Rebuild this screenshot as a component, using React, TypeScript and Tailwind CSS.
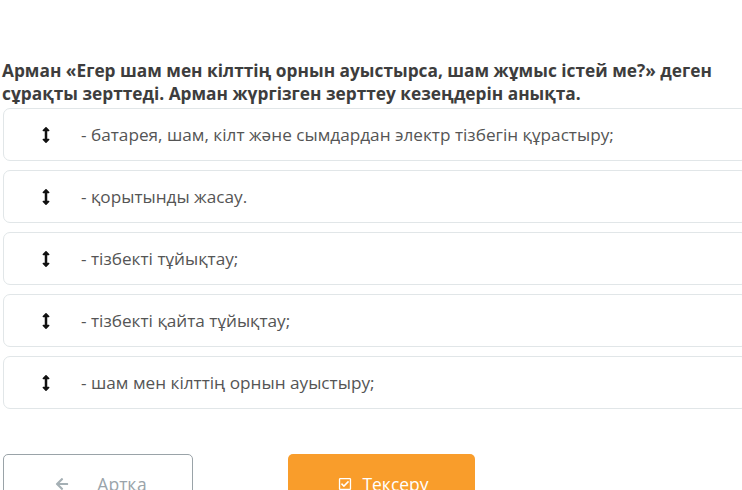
import React from "react";
import { FaArrowsAltV, FaArrowLeft, FaRegCheckSquare } from "react-icons/fa";

const items = [
  "- батарея, шам, кілт және сымдардан электр тізбегін құрастыру;",
  "- қорытынды жасау.",
  "- тізбекті тұйықтау;",
  "- тізбекті қайта тұйықтау;",
  "- шам мен кілттің орнын ауыстыру;",
];

export default function App() {
  return (
    <div
      className="w-[742px] h-[490px] overflow-hidden bg-white relative"
      style={{ fontFamily: '"Open Sans", "Noto Sans", sans-serif' }}
    >
      <div className="pt-[59px] pl-[2px] pr-2">
        <h2 className="text-[17.3px] leading-[23px] font-bold text-[#3d3d3d]">
          Арман «Егер шам мен кілттің орнын ауыстырса, шам жұмыс істей ме?» деген сұрақты зерттеді. Арман жүргізген зерттеу кезеңдерін анықта.
        </h2>
      </div>
      <div className="flex flex-col gap-[9px] mt-[3px] ml-[3px] w-[745px]">
        {items.map((t, i) => (
          <div
            key={i}
            className="h-[53px] rounded-[7px] border border-[#e1e6e8] flex items-center bg-white"
          >
            <FaArrowsAltV className="ml-[38px] w-[8px] h-[16px] text-[#111]" />
            <span className="ml-[31px] text-[17.2px] text-[#555]">{t}</span>
          </div>
        ))}
      </div>
      <div className="flex mt-[45px] ml-[3px] gap-[95px]">
        <div className="w-[190px] h-[60px] rounded-[5px] border border-[#9aa3a8] flex items-center justify-center gap-[28px] pl-[6px] text-[#9aa4aa]">
          <FaArrowLeft className="w-[14px] h-[14px] text-[#a5b0b5]" />
          <span className="text-[17.5px]">Артқа</span>
        </div>
        <div className="w-[187px] h-[60px] rounded-[5px] bg-[#f99d2b] flex items-center justify-center gap-[10px] text-white">
          <FaRegCheckSquare className="w-[14px] h-[14px] ml-[4px]" />
          <span className="text-[17.5px]">Тексеру</span>
        </div>
      </div>
    </div>
  );
}
